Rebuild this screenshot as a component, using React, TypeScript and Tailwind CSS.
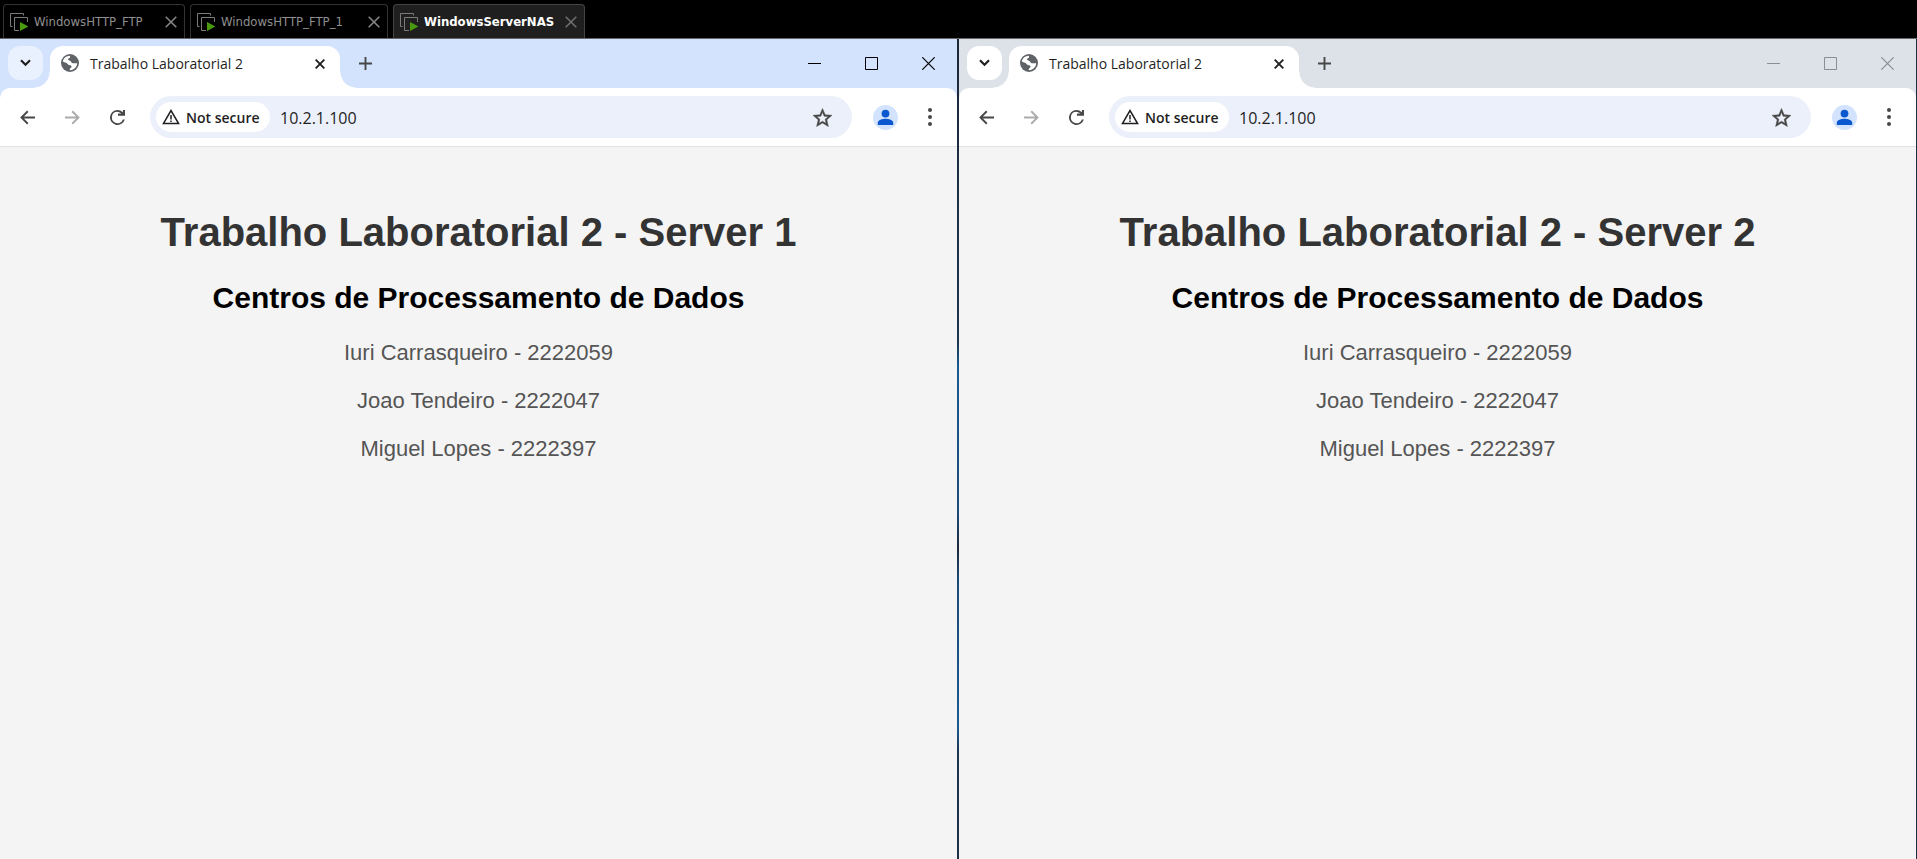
import React from "react";

function VmIcon() {
  return (
    <svg width="18" height="18" viewBox="0 0 18 18" fill="none" aria-hidden="true" className="shrink-0">
      <path d="M2.500 13.500H.5V.5h13v2" stroke="#7c7c7c" />
      <path d="M9 17.500H4.500V4.500h13V9" stroke="#7c7c7c" />
      <path d="M10 9l8.500 4.500L10 18z" fill="#4a9a10" />
    </svg>
  );
}

function VmTab({ name, width, active = false }: { name: string; width: string; active?: boolean }) {
  const tone = active ? "border-[#444] bg-[#1f1f1f]" : "border-[#333] bg-black";
  const text = active ? "font-bold text-white" : "text-[#8f8f8f]";
  return (
    <div className={`flex h-[34px] items-center rounded-t-[4px] border border-b-0 pr-[6px] pl-[6px] ${width} ${tone}`}>
      <a href="#" className={`flex items-center gap-[6px] text-[13px] ${text}`}>
        <VmIcon />
        <span>{name}</span>
      </a>
      <button type="button" aria-label={`Close ${name}`} className="ml-auto p-px">
        <svg width="12" height="12" viewBox="0 0 12 12" stroke={active ? "#6f6f6f" : "#858585"} strokeWidth="1.600">
          <path d="M.7.7l10.600 10.600M11.300.7L.7 11.300" />
        </svg>
      </button>
    </div>
  );
}

function Globe() {
  return (
    <svg width="18" height="18" viewBox="1 1 22 22" aria-hidden="true" className="shrink-0">
      <circle cx="12" cy="12" r="11" fill="#5f6368" />
      <path
        fill="#fff"
        d="M3.200 10.300C4 6 7.500 3.300 11.600 3.200L12.300 4.600C11.800 6 9.600 6 9.600 7.600C9.600 9 12.800 8.500 13.300 10.400C13.700 12 15 12.200 17 12.200L20.800 12.400C20.500 17 17 20.500 12.400 20.800L11.600 20.700L12 18.600C14 18.200 14.600 16.200 13.200 15.200C11.800 14.300 9.600 14.700 8.700 13C8 11.600 6.500 11.800 3.200 10.300z"
      />
    </svg>
  );
}

function WindowControls({ focused }: { focused: boolean }) {
  const stroke = focused ? "#000" : "#8a8d91";
  const box = "flex h-[49px] w-[57px] items-center justify-center";
  return (
    <div className="ml-auto flex">
      <button type="button" aria-label="Minimize" className={box}>
        <svg width="13" height="13" stroke={stroke}><path d="M0 6.500h13" /></svg>
      </button>
      <button type="button" aria-label="Maximize" className={box}>
        <svg width="13" height="13" stroke={stroke} fill="none"><path d="M.5.5h12v12H.5z" /></svg>
      </button>
      <button type="button" aria-label="Close" className={box}>
        <svg width="13" height="13" stroke={stroke} strokeWidth="1.200"><path d="M.3.3l12.400 12.400M12.700.3L.3 12.700" /></svg>
      </button>
    </div>
  );
}

function TabStrip({ focused }: { focused: boolean }) {
  return (
    <div className="flex h-[49px] pl-2">
      <button
        type="button"
        aria-label="Search tabs"
        className={`mt-[7px] flex h-[34px] w-[35px] items-center justify-center rounded-[12px] ${
          focused ? "bg-[#e9f0fe]" : "bg-white"
        }`}
      >
        <svg width="11" height="8" viewBox="0 0 11 8" fill="none" stroke="#1f1f1f" strokeWidth="2.200">
          <path d="M1 1.300l4.500 4.500L10 1.300" />
        </svg>
      </button>
      <div className="relative mt-[7px] ml-[7px] flex h-[42px] w-[290px] items-start rounded-t-[13px] bg-white pt-2 pr-[10px] pl-[11px]">
        <span className="absolute bottom-0 -left-4 size-4 bg-[radial-gradient(circle_at_0_0,transparent_15px,white_16px)]" />
        <span className="absolute -right-4 bottom-0 size-4 bg-[radial-gradient(circle_at_100%_0,transparent_15px,white_16px)]" />
        <Globe />
        <span className="ml-[11px] text-[14px] leading-[20px] text-[#1f1f1f]">Trabalho Laboratorial 2</span>
        <button type="button" aria-label="Close tab" className="ml-auto flex size-5 items-center justify-center">
          <svg width="10" height="10" viewBox="0 0 10 10" stroke="#1f1f1f" strokeWidth="1.900">
            <path d="M.7.7l8.600 8.600M9.300.7L.7 9.300" />
          </svg>
        </button>
      </div>
      <button type="button" aria-label="New tab" className="mt-[7px] ml-2 flex size-[34px] items-center justify-center">
        <svg width="13" height="13" viewBox="0 0 13 13" stroke="#474747" strokeWidth="1.900">
          <path d="M0 6.500h13M6.500 0v13" />
        </svg>
      </button>
      <WindowControls focused={focused} />
    </div>
  );
}

function Toolbar() {
  const tool = "flex h-[42px] w-[45px] shrink-0 items-center justify-center";
  return (
    <div className="flex h-[59px] items-start rounded-t-[10px] border-b border-[#e0e2e4] bg-white pt-2 pl-[5px]">
      <button type="button" aria-label="Back" className={tool}>
        <svg width="15" height="15" viewBox="0 0 16 16" fill="none" stroke="#474747" strokeWidth="2">
          <path d="M16 8H2M8.300 1.300L1.600 8l6.700 6.700" />
        </svg>
      </button>
      <button type="button" aria-label="Forward" className={tool}>
        <svg width="15" height="15" viewBox="0 0 16 16" fill="none" stroke="#ababab" strokeWidth="2">
          <path d="M0 8H14M7.700 1.300L14.400 8l-6.700 6.700" />
        </svg>
      </button>
      <button type="button" aria-label="Reload" className={tool}>
        <svg width="15" height="15" viewBox="4 4 16 16" fill="#474747">
          <path d="M17.650 6.350A7.958 7.958 0 0 0 12 4a8 8 0 1 0 7.730 10h-2.080A6 6 0 1 1 12 6c1.660 0 3.140.69 4.220 1.780H12.500V10H20V4h-2.200z" />
        </svg>
      </button>
      <div className="ml-[10px] flex h-[42px] min-w-0 flex-1 items-center rounded-full bg-[#ecf0fa] pl-[6px]">
        <button
          type="button"
          className="flex h-[30px] w-[114px] shrink-0 items-center gap-[6px] rounded-full bg-white pl-[6px] text-[14px] font-semibold text-[#1f1f1f]"
        >
          <svg width="18" height="16" viewBox="0 0 18 16" fill="none" stroke="#1f1f1f" strokeWidth="1.500" className="shrink-0">
            <path d="M1.400 14.600L9 1.600l7.600 13z" />
            <path d="M9 6v4.500M9 11.500v1.500" />
          </svg>
          <span className="whitespace-nowrap">Not secure</span>
        </button>
        <input
          type="text"
          aria-label="Address"
          defaultValue="10.2.1.100"
          className="ml-[10px] min-w-0 flex-1 bg-transparent pt-px text-[16px] text-[#1f1f1f] outline-none"
        />
        <button type="button" aria-label="Bookmark this tab" className="mr-5 shrink-0">
          <svg width="19" height="19" viewBox="2 2 20 19" fill="#474747" stroke="#474747" strokeWidth="0.500">
            <path d="M22 9.240l-7.190-.62L12 2 9.190 8.630 2 9.240l5.460 4.730L5.820 21 12 17.270 18.180 21l-1.630-7.030L22 9.240zM12 15.400l-3.760 2.270 1-4.280-3.320-2.880 4.380-.38L12 6.100l1.710 4.040 4.380.38-3.320 2.880 1 4.280L12 15.400z" />
          </svg>
        </button>
      </div>
      <button type="button" aria-label="Profile" className="ml-[11px] flex h-[42px] w-[45px] shrink-0 items-center justify-center">
        <svg width="25" height="25" viewBox="0 0 25 25">
          <circle cx="12.500" cy="12.500" r="12.500" fill="#d3e3fd" />
          <circle cx="12.500" cy="8.600" r="3.900" fill="#0b57d0" />
          <path d="M4.800 20v-2.200c0-2.600 4.700-4 7.700-4s7.700 1.400 7.700 4V20z" fill="#0b57d0" />
        </svg>
      </button>
      <button type="button" aria-label="Menu" className="mr-[6px] flex h-[42px] w-[43px] shrink-0 items-center justify-center">
        <svg width="4" height="18" viewBox="0 0 4 18" fill="#474747">
          <circle cx="2" cy="2" r="2" />
          <circle cx="2" cy="9" r="2" />
          <circle cx="2" cy="16" r="2" />
        </svg>
      </button>
    </div>
  );
}

const students = ["Iuri Carrasqueiro - 2222059", "Joao Tendeiro - 2222047", "Miguel Lopes - 2222397"];

function BrowserWindow({ server, focused }: { server: number; focused: boolean }) {
  return (
    <section
      className={`flex min-w-0 flex-1 flex-col font-['Open_Sans','Noto_Sans',sans-serif] ${
        focused ? "bg-[#d3e3fd]" : "bg-[#dde1e8]"
      }`}
    >
      <TabStrip focused={focused} />
      <Toolbar />
      <main className="flex flex-1 flex-col items-center bg-[#f4f4f4] pt-[62px] text-center font-['Liberation_Sans',Arial,sans-serif]">
        <h1 className="text-[40px] leading-[46px] font-bold text-[#333]">Trabalho Laboratorial 2 - Server {server}</h1>
        <h2 className="mt-[26px] text-[30px] leading-[34px] font-bold text-black">Centros de Processamento de Dados</h2>
        <div className="mt-[25px] flex flex-col gap-[22px] text-[22px] leading-[26px] text-[#555]">
          {students.map((s) => (
            <p key={s}>{s}</p>
          ))}
        </div>
      </main>
    </section>
  );
}

export default function App() {
  return (
    <div className="flex min-h-screen flex-col bg-black">
      <nav
        aria-label="Virtual machines"
        className="flex h-[39px] items-end gap-[5px] border-b border-[#666] pl-[3px] font-['DejaVu_Sans_Condensed','DejaVu_Sans',sans-serif]"
      >
        <VmTab name="WindowsHTTP_FTP" width="w-[182px]" />
        <VmTab name="WindowsHTTP_FTP_1" width="w-[198px]" />
        <VmTab name="WindowsServerNAS" width="w-[192px]" active />
      </nav>
      <div className="flex flex-1 gap-[2px] border-r border-[#1c2f45] bg-[linear-gradient(#1c2838,#1c3550_37%,#1b5a90_40%,#1b4a78_58%,#1c2838_62%,#1b4a78_66%,#1b5a90_84%,#1c3550_87%,#1c2f45)]">
        <BrowserWindow server={1} focused />
        <BrowserWindow server={2} focused={false} />
      </div>
    </div>
  );
}
